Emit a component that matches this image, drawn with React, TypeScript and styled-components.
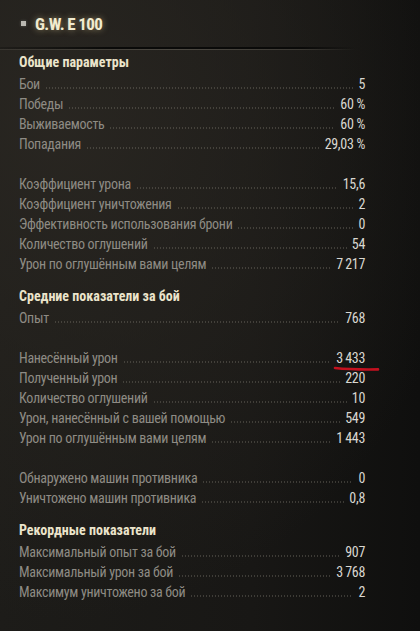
import React from "react";
import styled, { createGlobalStyle } from "styled-components";

const Global = createGlobalStyle`
  html, body { margin: 0; padding: 0; background: #141311; }
  #root { width: 420px; height: 631px; }
`;

const FONT = `"Roboto Condensed", Roboto, "Liberation Sans", sans-serif`;

const Page = styled.div`
  width: 420px;
  height: 631px;
  overflow: hidden;
  box-sizing: border-box;
  font-family: ${FONT};
  background:
    radial-gradient(ellipse 420px 500px at 60px 120px, rgba(42, 39, 34, 0.9), rgba(20, 19, 17, 0) 100%),
    linear-gradient(90deg, #1d1c19 0%, #181715 60%, #0f0f0e 100%);
  display: flex;
  flex-direction: column;
`;

const TitleRow = styled.div`
  height: 47px;
  display: flex;
  align-items: center;
  gap: 9px;
  padding-left: 21px;
`;

const Bullet = styled.span`
  width: 5px;
  height: 5px;
  background: #b9b7b1;
  box-shadow: 0 0 3px rgba(255, 255, 255, 0.25);
`;

const Title = styled.h1`
  margin: 0;
  font-size: 17px;
  font-weight: 700;
  color: #f1ebcf;
  letter-spacing: -0.6px;
  text-shadow: 0 0 6px rgba(255, 236, 170, 0.5);
`;

const Divider = styled.div`
  width: 356px;
  height: 2px;
  background: linear-gradient(90deg, rgba(0,0,0,0.2), #0a0a09 30%, #0a0a09 85%, rgba(0,0,0,0));
  position: relative;
  &::after {
    content: "";
    position: absolute;
    left: 0; right: 0; bottom: -1px;
    height: 1px;
    background: linear-gradient(90deg, rgba(90,86,78,0.35), rgba(90,86,78,0.75) 50%, rgba(90,86,78,0.5) 85%, rgba(90,86,78,0));
  }
`;

const Section = styled.section`
  padding: 0 55px 0 19px;
  display: flex;
  flex-direction: column;
  margin-top: 10px;
  &:first-of-type { margin-top: 1px; }
`;

const Header = styled.h2`
  margin: 0;
  height: 24px;
  display: flex;
  align-items: center;
  font-size: 14px;
  font-weight: 700;
  letter-spacing: 0;
  color: #ebe4cb;
`;

const Row = styled.div`
  height: 20px;
  display: flex;
  align-items: center;
  font-size: 14px;
  letter-spacing: -0.3px;
`;

const Spacer = styled.div`
  height: 20px;
`;

const Label = styled.span`
  color: #8e8b84;
  white-space: nowrap;
`;

const Leader = styled.span`
  flex: 1;
  align-self: stretch;
  margin: 0 5px 5px 5px;
  background-image: radial-gradient(circle, rgba(120, 116, 106, 0.4) 0.6px, transparent 0.8px);
  background-size: 3px 2px;
  background-repeat: repeat-x;
  background-position: left bottom;
`;

const Value = styled.span`
  color: #d9d7d1;
  white-space: nowrap;
  position: relative;
`;

const Underline = styled.svg`
  position: absolute;
  left: -2px;
  top: 16px;
  width: 46px;
  height: 6px;
  overflow: visible;
`;

type Item = { l: string; v: string; mark?: boolean } | null;

const NS = "\u2009";

const sections: { title: string; items: Item[] }[] = [
  {
    title: "Общие параметры",
    items: [
      { l: "Бои", v: "5" },
      { l: "Победы", v: "60 %" },
      { l: "Выживаемость", v: "60 %" },
      { l: "Попадания", v: "29,03 %" },
      null,
      { l: "Коэффициент урона", v: "15,6" },
      { l: "Коэффициент уничтожения", v: "2" },
      { l: "Эффективность использования брони", v: "0" },
      { l: "Количество оглушений", v: "54" },
      { l: "Урон по оглушённым вами целям", v: `7${NS}217` },
    ],
  },
  {
    title: "Средние показатели за бой",
    items: [
      { l: "Опыт", v: "768" },
      null,
      { l: "Нанесённый урон", v: `3${NS}433`, mark: true },
      { l: "Полученный урон", v: "220" },
      { l: "Количество оглушений", v: "10" },
      { l: "Урон, нанесённый с вашей помощью", v: "549" },
      { l: "Урон по оглушённым вами целям", v: `1${NS}443` },
      null,
      { l: "Обнаружено машин противника", v: "0" },
      { l: "Уничтожено машин противника", v: "0,8" },
    ],
  },
  {
    title: "Рекордные показатели",
    items: [
      { l: "Максимальный опыт за бой", v: "907" },
      { l: "Максимальный урон за бой", v: `3${NS}768` },
      { l: "Максимум уничтожено за бой", v: "2" },
    ],
  },
];

export default function App() {
  return (
    <Page>
      <Global />
      <TitleRow>
        <Bullet />
        <Title>G.W. E 100</Title>
      </TitleRow>
      <Divider />
      {sections.map((s) => (
        <Section key={s.title}>
          <Header>{s.title}</Header>
          {s.items.map((it, i) =>
            it ? (
              <Row key={i}>
                <Label>{it.l}</Label>
                <Leader />
                <Value>
                  {it.v}
                  {it.mark && (
                    <Underline viewBox="0 0 46 6">
                      <path
                        d="M1 2 C 12 3.2, 30 3.6, 44 3.4"
                        stroke="#c4111f"
                        strokeWidth="2.6"
                        strokeLinecap="round"
                        fill="none"
                      />
                    </Underline>
                  )}
                </Value>
              </Row>
            ) : (
              <Spacer key={i} />
            )
          )}
        </Section>
      ))}
    </Page>
  );
}
